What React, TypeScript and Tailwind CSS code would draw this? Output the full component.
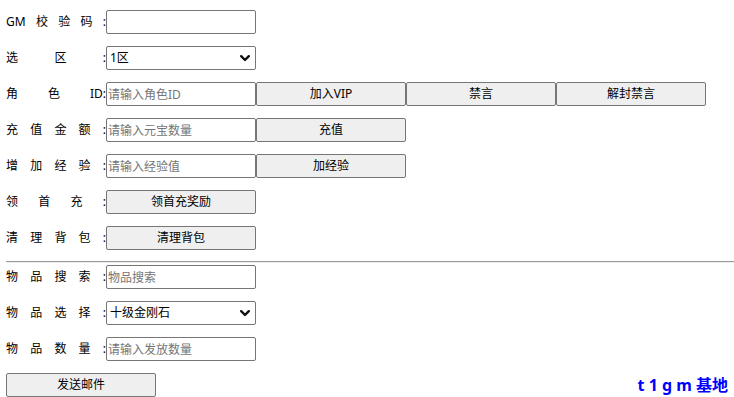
import React from "react";

const Label = ({ parts }: { parts: string[] }) => (
  <div className="flex w-[100px] shrink-0 justify-between text-[12px] leading-[24px] text-black">
    {parts.map((p, i) => (
      <span key={i}>{p}</span>
    ))}
  </div>
);

const Input = ({ placeholder }: { placeholder?: string }) => (
  <input
    placeholder={placeholder}
    className="block h-[24px] w-[150px] shrink-0 rounded-[2px] border border-[#767676] bg-white px-[1px] text-[12px] text-black outline-none placeholder:text-[#757575]"
  />
);

const Btn = ({ children }: { children: React.ReactNode }) => (
  <button className="block h-[24px] w-[150px] shrink-0 rounded-[2px] border border-[#767676] bg-[#efefef] text-[12px] leading-none text-black">
    {children}
  </button>
);

const Select = ({ value }: { value: string }) => (
  <div className="relative h-[24px] w-[150px] shrink-0">
    <select
      defaultValue={value}
      className="block h-[24px] w-[150px] appearance-none rounded-[2px] border border-[#767676] bg-white pl-[3px] text-[12px] text-black outline-none"
    >
      <option>{value}</option>
    </select>
    <svg
      className="pointer-events-none absolute right-[6px] top-[9px]"
      width="10"
      height="7"
      viewBox="0 0 10 7"
    >
      <polyline points="1.2,1.2 5,5 8.8,1.2" fill="none" stroke="#111" strokeWidth="2.4" strokeLinecap="round" strokeLinejoin="round" />
    </svg>
  </div>
);

const Row = ({ children, last }: { children: React.ReactNode; last?: boolean }) => (
  <div className={`flex h-[24px] items-center ${last ? "mb-[11px]" : "mb-[12px]"}`}>{children}</div>
);

export default function App() {
  return (
    <div className="min-h-[397px] bg-white pl-[6px] pt-[10px] font-['Noto_Sans','Noto_Sans_CJK_SC',sans-serif] text-black">
      <Row>
        <Label parts={["GM", "校", "验", "码", ":"]} />
        <Input />
      </Row>
      <Row>
        <Label parts={["选", "区", ":"]} />
        <Select value="1区" />
      </Row>
      <Row>
        <Label parts={["角", "色", "ID:"]} />
        <Input placeholder="请输入角色ID" />
        <Btn>加入VIP</Btn>
        <Btn>禁言</Btn>
        <Btn>解封禁言</Btn>
      </Row>
      <Row>
        <Label parts={["充", "值", "金", "额", ":"]} />
        <Input placeholder="请输入元宝数量" />
        <Btn>充值</Btn>
      </Row>
      <Row>
        <Label parts={["增", "加", "经", "验", ":"]} />
        <Input placeholder="请输入经验值" />
        <Btn>加经验</Btn>
      </Row>
      <Row>
        <Label parts={["领", "首", "充", ":"]} />
        <Btn>领首充奖励</Btn>
      </Row>
      <Row last>
        <Label parts={["清", "理", "背", "包", ":"]} />
        <Btn>清理背包</Btn>
      </Row>
      <div className="mb-[2px] h-[2px] border-t border-b border-t-[#9a9a9a] border-b-[#eeeeee]" />
      <Row>
        <Label parts={["物", "品", "搜", "索", ":"]} />
        <Input placeholder="物品搜索" />
      </Row>
      <Row>
        <Label parts={["物", "品", "选", "择", ":"]} />
        <Select value="十级金刚石" />
      </Row>
      <Row>
        <Label parts={["物", "品", "数", "量", ":"]} />
        <Input placeholder="请输入发放数量" />
      </Row>
      <div className="flex h-[24px] items-center justify-between pr-[6px]">
        <Btn>发送邮件</Btn>
        <span className="text-[16px] font-bold text-[#0000ff]">t 1 g m 基地</span>
      </div>
    </div>
  );
}
